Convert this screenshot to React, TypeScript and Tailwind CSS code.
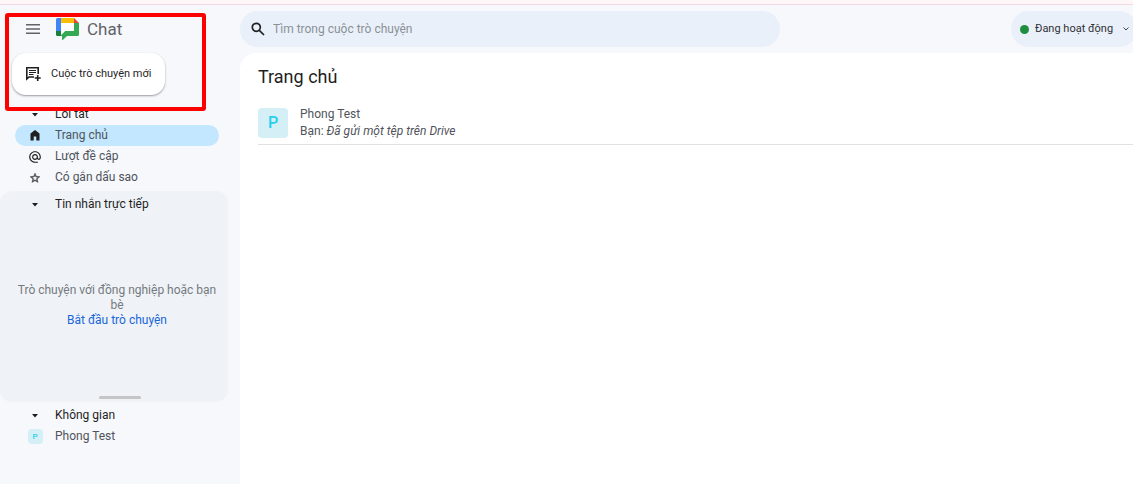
import type { ReactNode } from "react";
import clsx from "clsx";

const SHORTCUTS = [
    { id: "home", label: "Trang chủ", icon: <HomeIcon />, active: true },
    { id: "mentions", label: "Lượt đề cập", icon: <MentionIcon />, active: false },
    { id: "starred", label: "Có gắn dấu sao", icon: <StarIcon />, active: false },
];

function MenuIcon() {
    return (
        <svg viewBox="0 0 14 12" className="h-3 w-3.5" fill="#5f6368">
            <path d="M0 1h14v1.400H0zM0 5.300h14v1.400H0zM0 9.600h14V11H0z" />
        </svg>
    );
}

function ChatLogo() {
    return (
        <svg viewBox="0 0 23 22" className="h-[22px] w-[23px]">
            <path d="M1.500 0H5v13H0V1.500A1.500 1.500 0 0 1 1.500 0z" fill="#4285f4" />
            <path d="M5 0h13v5H5z" fill="#fbbc04" />
            <path d="M18 0l5 5h-5z" fill="#ea4335" />
            <path d="M5 5h13v8H5z" fill="#fff" />
            <path d="M0 13h5v5H1.500A1.500 1.500 0 0 1 0 16.500z" fill="#188038" />
            <path d="M18 5h5v11.500a1.500 1.500 0 0 1-1.500 1.500H11l-4 3.800c-.5.400-1 .1-1-.5V18H5v-1L9 13h9z" fill="#34a853" />
            <path d="M5 13h4l-4 4z" fill="#fff" />
        </svg>
    );
}

function NewChatIcon() {
    return (
        <svg viewBox="0 0 15 14" className="h-3.5 w-[15px]" fill="none" stroke="#1f1f1f" strokeWidth="1.600">
            <path d="M8 10H3L.8 12V.8h11.400V7" />
            <path d="M3 3.500h7M3 5.500h7M3 7.500h4.500" strokeWidth="1.100" />
            <path d="M11.700 8v6M8.700 11h6" />
        </svg>
    );
}

function Caret() {
    return (
        <svg viewBox="0 0 6 4" className="h-1 w-1.5" fill="#1f1f1f">
            <path d="M0 0h6L3 3.500z" />
        </svg>
    );
}

function HomeIcon() {
    return (
        <svg viewBox="0 0 10 11" className="h-[11px] w-2.5" fill="#1f1f1f">
            <path d="M5 0l4.500 3.600V10.500H6.300V6.500H3.700v4H.5V3.600z" />
        </svg>
    );
}

function MentionIcon() {
    return (
        <svg viewBox="0 0 24 24" className="h-3.5 w-3.5" fill="#1f1f1f">
            <path d="M12 1.950c-5.520 0-10 4.480-10 10s4.480 10 10 10h5v-2h-5c-4.340 0-8-3.660-8-8s3.660-8 8-8 8 3.660 8 8v1.430c0 .790-.710 1.570-1.500 1.570s-1.500-.780-1.500-1.570v-1.430c0-2.760-2.240-5-5-5s-5 2.240-5 5 2.240 5 5 5c1.380 0 2.640-.560 3.540-1.470.650.890 1.770 1.470 2.960 1.470 1.970 0 3.500-1.600 3.500-3.570v-1.430c0-5.520-4.480-10-10-10zm0 13c-1.660 0-3-1.340-3-3s1.340-3 3-3 3 1.340 3 3-1.340 3-3 3z" />
        </svg>
    );
}

function StarIcon() {
    return (
        <svg viewBox="0 0 24 24" className="h-3 w-3" fill="#444746">
            <path d="M22 9.240l-7.190-.620L12 2 9.190 8.630 2 9.240l5.460 4.730L5.820 21 12 17.270 18.180 21l-1.630-7.030L22 9.240zM12 15.400l-3.760 2.270 1-4.280-3.320-2.880 4.380-.380L12 6.100l1.710 4.040 4.380.380-3.320 2.880 1 4.280L12 15.400z" stroke="#444746" strokeWidth=".8" />
        </svg>
    );
}

function SearchIcon() {
    return (
        <svg viewBox="0 0 14 14" className="h-3.5 w-3.5" fill="none" stroke="#1f1f1f" strokeWidth="1.700">
            <circle cx="5.300" cy="5.300" r="4" />
            <path d="M8.300 8.300l4.700 4.700" />
        </svg>
    );
}

function NavRow({ icon, children, active, strong }: { icon: ReactNode; children: ReactNode; active?: boolean; strong?: boolean }) {
    return (
        <button
            className={clsx(
                "flex h-[21px] w-full items-center rounded-full text-left text-[12px] leading-[15px]",
                active && "bg-[#c2e7ff]",
                strong ? "text-[#1f1f1f]" : "text-[#50535a]"
            )}
        >
            <span className="flex w-10 shrink-0 justify-center">{icon}</span>
            <span>{children}</span>
        </button>
    );
}

export default function App() {
    return (
        <div className="relative flex min-h-screen flex-col overflow-hidden bg-[#f6f8fc] font-['Roboto',sans-serif] text-[#50535a]">
            <div className="h-[5px] border-b border-[#f3d9e3] bg-[#fff6f7]" />

            <div className="flex flex-1">
                <aside className="w-60 shrink-0">
                    <div className="flex h-12 items-center pl-[26px]">
                        <button aria-label="Menu">
                            <MenuIcon />
                        </button>
                        <div className="flex items-center gap-2 pl-4">
                            <ChatLogo />
                            <span className="text-[17px] leading-5 text-[#5f6368]">Chat</span>
                        </div>
                    </div>

                    <button className="ml-3 flex h-[42px] items-center gap-2.5 rounded-[14px] bg-white px-3.5 text-[11px] text-[#1f1f1f] shadow-[0_1px_2px_rgba(60,64,67,0.5)]">
                        <NewChatIcon />
                        Cuộc trò chuyện mới
                    </button>

                    <nav className="ml-[15px] mt-[9px] w-51">
                        <NavRow icon={<Caret />} strong>Lối tắt</NavRow>
                        {SHORTCUTS.map(item => (
                            <NavRow key={item.id} icon={item.icon} active={item.active}>{item.label}</NavRow>
                        ))}
                    </nav>

                    <section className="mr-3 mt-[3px] flex h-[211px] flex-col rounded-xl bg-[#eff3f8] pb-[3px] pt-[3px]">
                        <div className="pl-[15px]">
                            <NavRow icon={<Caret />} strong>Tin nhắn trực tiếp</NavRow>
                        </div>
                        <div className="flex flex-1 flex-col items-center justify-center pl-4 pr-2.5 text-center text-[12px] leading-[15px] text-[#757a7e]">
                            <p>Trò chuyện với đồng nghiệp hoặc bạn bè</p>
                            <a href="#" className="text-[#1a66d9]">Bắt đầu trò chuyện</a>
                        </div>
                        <div className="ml-[99px] h-[3px] w-[42px] rounded-full bg-[#c4c7c5]" />
                    </section>

                    <div className="ml-[15px] mt-[3px] w-51">
                        <NavRow icon={<Caret />} strong>Không gian</NavRow>
                        <NavRow
                            icon={
                                <span className="flex h-[15px] w-[15px] items-center justify-center rounded bg-[#d4eff5] text-[8px] font-medium text-[#24d0ee]">
                                    P
                                </span>
                            }
                        >
                            Phong Test
                        </NavRow>
                    </div>
                </aside>

                <div className="flex min-w-0 flex-1 flex-col">
                    <header className="flex h-12 items-center justify-between">
                        <label className="flex h-9 w-[540px] items-center gap-2 rounded-full bg-[#e9f0fa] pl-[11px]">
                            <SearchIcon />
                            <input
                                type="text"
                                aria-label="Tìm trong cuộc trò chuyện"
                                placeholder="Tìm trong cuộc trò chuyện"
                                className="flex-1 bg-transparent text-[12px] outline-none placeholder:text-[#8b9096]"
                            />
                        </label>
                        <button className="-mr-1 flex h-9 w-[126px] items-center rounded-full bg-[#e9f0fa] pl-[9px] text-[11px] text-[#303134]">
                            <span className="mr-1.5 h-[9px] w-[9px] rounded-full bg-[#1e8e3e]" />
                            Đang hoạt động
                            <svg viewBox="0 0 6 4" className="ml-2.5 h-1 w-1.5" fill="none" stroke="#444746">
                                <path d="M.5.500L3 3 5.500.500" />
                            </svg>
                        </button>
                    </header>

                    <main className="flex-1 rounded-tl-2xl bg-white pl-[18px] pt-3">
                        <h1 className="text-[18px] leading-6 text-[#1f1f1f]">Trang chủ</h1>
                        <div className="mt-[17px] flex items-center gap-3 border-b border-[#dfe1e5] pb-1">
                            <div className="flex h-[30px] w-[30px] items-center justify-center rounded bg-[#d4eff5] text-[16px] font-medium text-[#24d0ee]">
                                P
                            </div>
                            <div className="text-[12px] leading-[17px]">
                                <p>Phong Test</p>
                                <p>
                                    Bạn: <em>Đã gửi một tệp trên Drive</em>
                                </p>
                            </div>
                        </div>
                    </main>
                </div>
            </div>

            {/* highlight around the new chat button */}
            <div className="pointer-events-none absolute left-[5px] top-[13px] h-[98px] w-[201px] rounded-[3px] border-4 border-[#ff0000]" />
        </div>
    );
}
